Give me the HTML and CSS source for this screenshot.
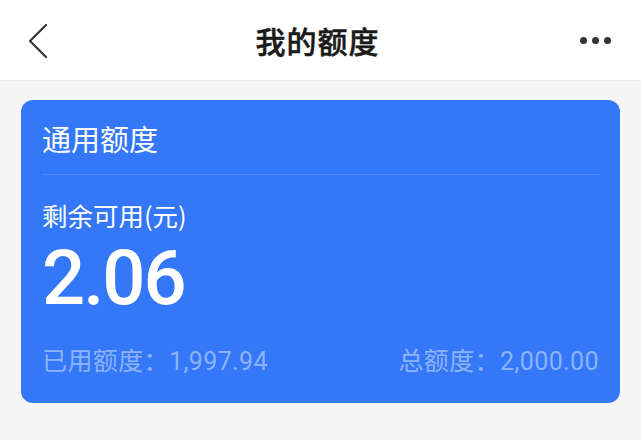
FILE: index.html
```html
<!DOCTYPE html>
<html lang="zh-CN">
<head>
<meta charset="utf-8">
<title>我的额度</title>
<link rel="stylesheet" href="styles.css">
</head>
<body>
<header class="nav">
  <span class="nav-back">
    <svg width="22" height="36" viewBox="0 0 22 36"><path d="M19 2 L3 18 L19 34" fill="none" stroke="#333" stroke-width="2.2" stroke-linecap="round" stroke-linejoin="round"/></svg>
  </span>
  <h1 class="nav-title">我的额度</h1>
  <span class="nav-more"><i></i><i></i><i></i></span>
</header>
<main class="content">
  <section class="card">
    <div class="card-title">通用额度</div>
    <div class="card-body">
      <div class="label">剩余可用(元)</div>
      <div class="amount">2.06</div>
      <div class="stats">
        <span>已用额度：1,997.94</span>
        <span>总额度：2,000.00</span>
      </div>
    </div>
  </section>
</main>
</body>
</html>
```

FILE: styles.css
```css
* { box-sizing: border-box; }
html, body { margin: 0; padding: 0; }
body {
  width: 641px;
  height: 440px;
  overflow: hidden;
  background: #f5f5f5;
  font-family: Roboto, "Noto Sans CJK SC", sans-serif;
  color: #222;
}
.nav {
  height: 81px;
  background: #fff;
  border-bottom: 1px solid #ececec;
  display: flex;
  align-items: center;
  justify-content: space-between;
  padding: 0 30px 0 27px;
}
.nav-back { display: flex; width: 22px; height: 36px; margin-top: 2px; }
.nav-title {
  margin: 0 0 0 6px;
  font-size: 30px;
  font-weight: 500;
  font-family: "Noto Sans CJK SC", sans-serif;
  color: #1a1a1a;
  letter-spacing: 1px;
  -webkit-text-stroke: 0.5px #1a1a1a;
}
.nav-more { display: flex; gap: 5px; width: 31px; }
.nav-more i {
  display: block;
  width: 7px;
  height: 7px;
  border-radius: 50%;
  background: #333;
}
.content { padding: 19px 21px 0; }
.card {
  background: #3477f8;
  border-radius: 12px;
  height: 303px;
  padding: 0 21px;
  color: #fff;
}
.card-title {
  height: 75px;
  display: flex;
  align-items: center;
  padding-top: 2px;
  font-size: 29px;
  font-family: "Noto Sans CJK SC", sans-serif;
  border-bottom: 1px solid rgba(255,255,255,0.13);
}
.card-body { padding-top: 24px; }
.label {
  font-size: 25.5px;
  line-height: 32px;
  font-family: "Noto Sans CJK SC", sans-serif;
}
.amount {
  font-size: 76px;
  line-height: 90px;
  font-weight: 500;
  letter-spacing: -2px;
  margin-top: 2px;
}
.stats {
  display: flex;
  justify-content: space-between;
  margin-top: 24px;
  font-size: 25px;
  line-height: 30px;
  letter-spacing: 0.4px;
  color: rgba(255,255,255,0.45);
}
```
